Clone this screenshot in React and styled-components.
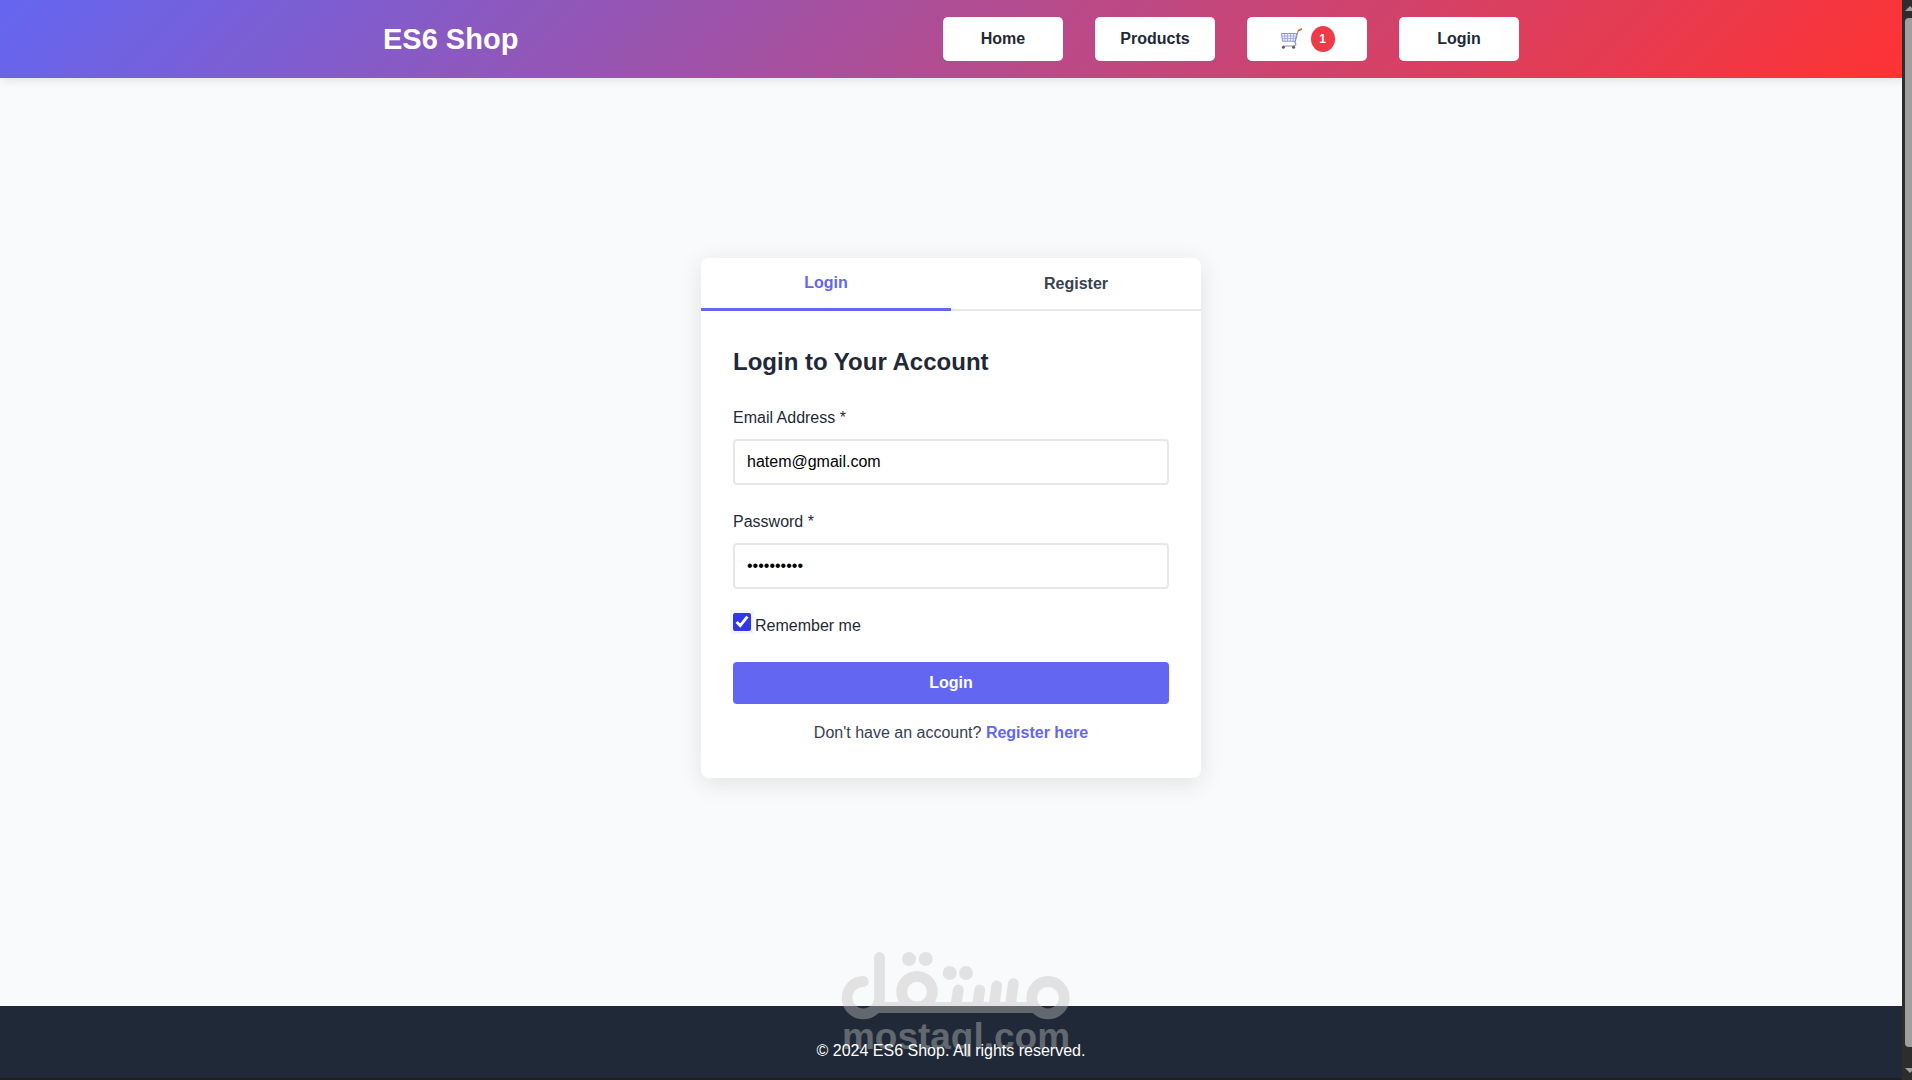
import { useState } from "react"
import styled, { createGlobalStyle } from "styled-components"

const GlobalStyle = createGlobalStyle`
  * {
    box-sizing: border-box;
    margin: 0;
    padding: 0;
  }

  body {
    background: #f9fafc;
    color: #1f2937;
    font-family: "Liberation Sans", Arial, sans-serif;
    font-size: 16px;
    line-height: 26px;
  }

  a {
    text-decoration: none;
  }
`

const WindowStyled = styled.div`
  display: flex;
  position: relative;
  min-height: 100vh;
`

const PageStyled = styled.div`
  flex: 1;
  display: flex;
  flex-direction: column;
  min-width: 0;
`

const HeaderStyled = styled.header`
  background: linear-gradient(135deg, #6366f1, #ff3333);
  box-shadow: 0 2px 10px rgba(0, 0, 0, 0.1);
`

const ContainerStyled = styled.div`
  display: flex;
  align-items: center;
  justify-content: space-between;
  max-width: 1200px;
  margin: 0 auto;
  padding: 17px 32px;
`

const LogoStyled = styled.h1`
  color: #fff;
  font-size: 29px;
  line-height: 44px;
`

const NavStyled = styled.nav`
  display: flex;
  gap: 32px;
`

const NavLinkStyled = styled.a`
  display: flex;
  align-items: center;
  justify-content: center;
  gap: 9px;
  width: 120px;
  height: 44px;
  background: #fff;
  border-radius: 5px;
  color: #1f2937;
  font-weight: bold;
`

const BadgeStyled = styled.span`
  width: 24px;
  height: 26px;
  background: #ef3a47;
  border-radius: 50%;
  color: #fff;
  font-size: 12px;
  text-align: center;
`

const MainStyled = styled.main`
  flex: 1;
  display: flex;
  align-items: center;
  justify-content: center;
  margin-bottom: 48px;
`

const CardStyled = styled.section`
  width: 500px;
  background: #fff;
  border-radius: 8px;
  box-shadow: 0 5px 25px rgba(0, 0, 0, 0.1);
  overflow: hidden;
`

const TabsStyled = styled.div`
  display: grid;
  grid-template-columns: 1fr 1fr;
  height: 53px;
`

const TabStyled = styled.button`
  background: none;
  border: none;
  border-bottom: ${({ $active }) => ($active ? "3px solid #6366f1" : "2px solid #e5e7eb")};
  color: ${({ $active }) => ($active ? "#6366f1" : "#374151")};
  font-family: inherit;
  font-size: 16px;
  font-weight: bold;
  cursor: pointer;
`

const FormStyled = styled.form`
  display: flex;
  flex-direction: column;
  gap: 24px;
  padding: 32px;

  h2 {
    font-size: 24px;
    line-height: 38px;
  }
`

const FieldStyled = styled.div`
  display: flex;
  flex-direction: column;
  gap: 8px;
`

const InputStyled = styled.input`
  height: 46px;
  padding: 0 12px;
  background: #fff;
  border: 2px solid #e5e7eb;
  border-radius: 4px;
  color: #000;
  font-family: inherit;
  font-size: 16px;
`

const RememberStyled = styled.div`
  display: flex;
  gap: 4px;
  height: 25px;

  input {
    width: 18px;
    height: 18px;
    accent-color: #3035ee;
    box-shadow: 0 0 0 3px #f5f5f7;
  }
`

const ActionsStyled = styled.div`
  display: flex;
  flex-direction: column;
  gap: 16px;
  text-align: center;
`

const SubmitStyled = styled.button`
  height: 42px;
  background: #6366f1;
  border: none;
  border-radius: 4px;
  color: #fff;
  font-family: inherit;
  font-size: 16px;
  font-weight: bold;
  cursor: pointer;
`

const SwitchStyled = styled.p`
  color: #374151;

  a {
    color: #6366f1;
    font-weight: bold;
  }
`

const FooterStyled = styled.footer`
  padding: 32px 32px 14px;
  background: #1f2937;
  border-bottom: 2px solid #1e1e25;
  color: #fff;
  text-align: center;

  p {
    position: relative;
    z-index: 2;
  }
`

const WatermarkStyled = styled.svg`
  position: absolute;
  z-index: 1;
  bottom: 18px;
  left: 50%;
  transform: translateX(-50%);
  pointer-events: none;
`

const ScrollbarStyled = styled.div`
  display: flex;
  flex-direction: column;
  gap: 6px;
  width: 10px;
  padding: 6px 0 6px 3px;
  background: #2d2d2d;

  svg {
    display: block;
  }
`

const ThumbStyled = styled.div`
  flex: 1;
  background: #9f9f9f;
  border-radius: 4px 0 0 4px;
`

const CartIcon = () => (
  <svg width="22" height="22" viewBox="0 0 22 22" fill="none" aria-label="Cart">
    <path d="M1.5 5.5H17L15.2 13.2H2.5Z" fill="#eef0fb" stroke="#8d95cf" strokeWidth="1" />
    <path d="M4.5 5.5L5 13M7.5 5.5V13M10.5 5.5V13M13.7 5.5L13 13M2 8H16.5M2.2 10.5H16" stroke="#9aa3dc" strokeWidth=".8" />
    <path d="M20 1.8L18 3.2L15 14.4L16 16.5L14.5 18H3.2" stroke="#8a91ad" strokeWidth="1.1" />
    <path d="M18.8 2.3L21.4 1.2" stroke="#c77747" strokeWidth="2" strokeLinecap="round" />
    <circle cx="3.4" cy="19.3" r="1.5" fill="#55596b" />
    <circle cx="13.6" cy="19.3" r="1.5" fill="#55596b" />
  </svg>
)

const Watermark = () => (
  <WatermarkStyled width="230" height="110" viewBox="0 0 230 110">
    <g opacity=".41" fill="#c2c2c2" stroke="none">
      <g fill="none" stroke="#c2c2c2" strokeWidth="10.8">
        <path d="M38.5 5.5V45.7A16.2 16.2 0 1 1 22.3 29.5" strokeLinecap="round" />
        <path d="M34 55.5H197" />
        <circle cx="76" cy="39.7" r="15.3" />
        <circle cx="207" cy="45.7" r="16.2" />
        <path d="M117.3 38L115 53M138.7 38L136.7 53M155.7 34L153 53M172.3 31.7L169.5 53" strokeLinecap="round" />
      </g>
      <circle cx="68" cy="7" r="7" />
      <circle cx="84.7" cy="7" r="7" />
      <circle cx="108.7" cy="21" r="7" />
      <circle cx="125" cy="21" r="7" />
      <text x="115" y="97" textAnchor="middle" fontSize="37" fontWeight="bold">mostaql.com</text>
    </g>
  </WatermarkStyled>
)

const Scrollbar = () => (
  <ScrollbarStyled aria-hidden="true">
    <svg width="7" height="6" viewBox="0 0 7 6"><path d="M0 5L5 0L7 2V5Z" fill="#9f9f9f" /></svg>
    <ThumbStyled />
    <svg width="7" height="21" viewBox="0 0 7 21"><path d="M0 15L5 20L7 18V15Z" fill="#9f9f9f" /></svg>
  </ScrollbarStyled>
)

const App = () => {
  const [tab, setTab] = useState("login")
  const [input, setInput] = useState({ email: "hatem@gmail.com", password: "hatem12345" })
  const [remember, setRemember] = useState(true)

  const handleChange = (e) => {
    setInput((prev) => ({
      ...prev,
      [e.target.type]: e.target.value
    }))
  }

  const handleSubmit = (e) => {
    e.preventDefault()
  }

  return (
    <WindowStyled>
      <GlobalStyle />
      <PageStyled>
        <HeaderStyled>
          <ContainerStyled>
            <LogoStyled>ES6 Shop</LogoStyled>
            <NavStyled>
              <NavLinkStyled href="#home">Home</NavLinkStyled>
              <NavLinkStyled href="#products">Products</NavLinkStyled>
              <NavLinkStyled href="#cart">
                <CartIcon />
                <BadgeStyled>1</BadgeStyled>
              </NavLinkStyled>
              <NavLinkStyled href="#login">Login</NavLinkStyled>
            </NavStyled>
          </ContainerStyled>
        </HeaderStyled>

        <MainStyled>
          <CardStyled>
            <TabsStyled>
              <TabStyled type="button" $active={tab === "login"} onClick={() => setTab("login")}>Login</TabStyled>
              <TabStyled type="button" $active={tab === "register"} onClick={() => setTab("register")}>Register</TabStyled>
            </TabsStyled>
            <FormStyled onSubmit={handleSubmit}>
              <h2>Login to Your Account</h2>
              <FieldStyled>
                <label htmlFor="email">Email Address *</label>
                <InputStyled id="email" type="email" value={input.email} onChange={handleChange} required />
              </FieldStyled>
              <FieldStyled>
                <label htmlFor="password">Password *</label>
                <InputStyled id="password" type="password" value={input.password} onChange={handleChange} required />
              </FieldStyled>
              <RememberStyled>
                <input id="remember" type="checkbox" checked={remember} onChange={(e) => setRemember(e.target.checked)} />
                <label htmlFor="remember">Remember me</label>
              </RememberStyled>
              <ActionsStyled>
                <SubmitStyled type="submit">Login</SubmitStyled>
                <SwitchStyled>
                  Don't have an account? <a href="#register">Register here</a>
                </SwitchStyled>
              </ActionsStyled>
            </FormStyled>
          </CardStyled>
        </MainStyled>

        <FooterStyled>
          <p>© 2024 ES6 Shop. All rights reserved.</p>
        </FooterStyled>
      </PageStyled>
      <Scrollbar />
      <Watermark />
    </WindowStyled>
  )
}

export default App
